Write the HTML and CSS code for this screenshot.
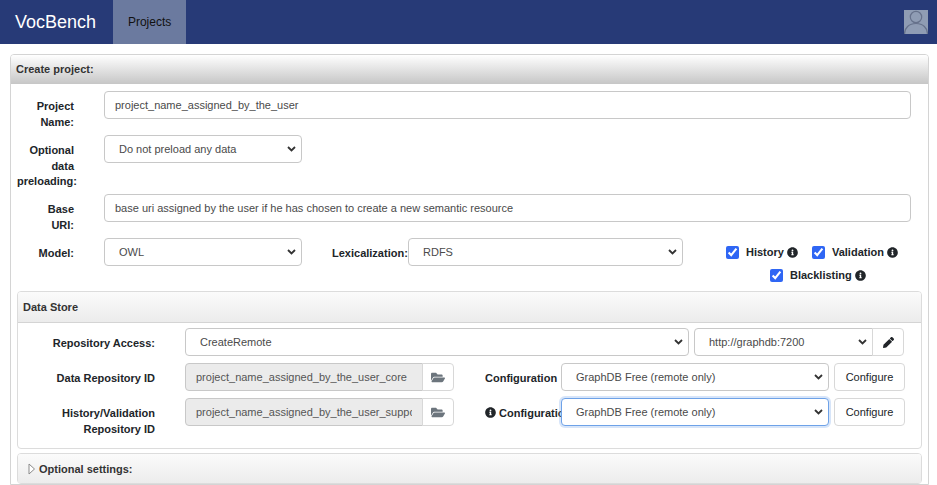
FILE: index.html
```html
<!DOCTYPE html>
<html lang="en">
<head>
    <meta charset="UTF-8">
    <title>VocBench</title>
    <link rel="stylesheet" href="styles.css">
</head>
<body>
    <svg class="defs" width="0" height="0">
        <symbol id="icon-info" viewBox="0 0 512 512"><path d="M256 8C119.043 8 8 119.083 8 256c0 136.997 111.043 248 248 248s248-111.003 248-248C504 119.083 392.957 8 256 8zm0 110c23.196 0 42 18.804 42 42s-18.804 42-42 42-42-18.804-42-42 18.804-42 42-42zm56 254c0 6.627-5.373 12-12 12h-88c-6.627 0-12-5.373-12-12v-24c0-6.627 5.373-12 12-12h12v-64h-12c-6.627 0-12-5.373-12-12v-24c0-6.627 5.373-12 12-12h64c6.627 0 12 5.373 12 12v100h12c6.627 0 12 5.373 12 12v24z"/></symbol>
        <symbol id="icon-folder" viewBox="0 0 576 512"><path d="M572.694 292.093L500.27 416.248A63.997 63.997 0 0 1 444.989 448H45.025c-18.523 0-30.064-20.093-20.731-36.093l72.424-124.155A64 64 0 0 1 152 256h399.964c18.523 0 30.064 20.093 20.73 36.093zM152 224h328v-48c0-26.51-21.49-48-48-48H272l-64-64H48C21.49 64 0 85.49 0 112v278.046l69.077-118.418C86.214 242.25 117.989 224 152 224z"/></symbol>
    </svg>

    <nav class="navbar">
        <a class="brand">VocBench</a>
        <a class="nav-tab">Projects</a>
        <div class="avatar">
            <svg viewBox="0 0 24 24" width="24" height="24">
                <circle cx="12" cy="7" r="5.700"/>
                <path d="M0.500 24c0-6 4.500-10.500 11.500-10.500s11.500 4.500 11.500 10.500"/>
            </svg>
        </div>
    </nav>

    <main class="panel">
        <div class="panel-head">Create project:</div>
        <form class="project-form">
            <div class="row">
                <label class="main-label">Project Name:</label>
                <input class="control grow" type="text" value="project_name_assigned_by_the_user">
            </div>
            <div class="row">
                <label class="main-label">Optional data preloading:</label>
                <select class="control select-main"><option>Do not preload any data</option></select>
            </div>
            <div class="row">
                <label class="main-label">Base<br>URI:</label>
                <input class="control grow" type="text" value="base uri assigned by the user if he has chosen to create a new semantic resource">
            </div>
            <div class="row">
                <label class="main-label">Model:</label>
                <select class="control select-main"><option>OWL</option></select>
                <label class="lex-label">Lexicalization:</label>
                <select class="control select-lex"><option>RDFS</option></select>
                <div class="checks">
                    <div class="check-line">
                        <label class="check"><input type="checkbox" checked>History <svg class="info"><use href="#icon-info"/></svg></label>
                        <label class="check"><input type="checkbox" checked>Validation <svg class="info"><use href="#icon-info"/></svg></label>
                    </div>
                    <div class="check-line second">
                        <label class="check"><input type="checkbox" checked>Blacklisting <svg class="info"><use href="#icon-info"/></svg></label>
                    </div>
                </div>
            </div>

            <section class="card">
                <div class="card-head">Data Store</div>
                <div class="card-body">
                    <div class="store-row">
                        <label class="store-label">Repository Access:</label>
                        <select class="control select-access"><option>CreateRemote</option></select>
                        <div class="group url-group">
                            <select class="control"><option>http://graphdb:7200</option></select>
                            <button type="button" class="btn icon-btn">
                                <svg width="11" height="11" viewBox="0 0 512 512"><path d="M497.9 142.1l-46.1 46.1c-4.7 4.7-12.3 4.7-17 0l-111-111c-4.7-4.7-4.7-12.3 0-17l46.1-46.1c18.7-18.7 49.1-18.7 67.9 0l60.1 60.1c18.8 18.7 18.8 49.1 0 67.9zM284.2 99.8L21.6 362.4.4 483.9c-2.9 16.4 11.4 30.6 27.8 27.8l121.5-21.3 262.6-262.6c4.7-4.7 4.7-12.3 0-17l-111-111c-4.8-4.7-12.4-4.7-17.1 0z"/></svg>
                            </button>
                        </div>
                    </div>
                    <div class="store-row">
                        <label class="store-label">Data Repository ID</label>
                        <div class="group repo-group">
                            <input class="control" type="text" disabled value="project_name_assigned_by_the_user_core">
                            <button type="button" class="btn icon-btn"><svg class="folder"><use href="#icon-folder"/></svg></button>
                        </div>
                        <label class="config-label">Configuration</label>
                        <select class="control select-config"><option>GraphDB Free (remote only)</option></select>
                        <button type="button" class="btn config-btn">Configure</button>
                    </div>
                    <div class="store-row last">
                        <label class="store-label">History/Validation Repository ID</label>
                        <div class="group repo-group">
                            <input class="control" type="text" disabled value="project_name_assigned_by_the_user_support">
                            <button type="button" class="btn icon-btn"><svg class="folder"><use href="#icon-folder"/></svg></button>
                        </div>
                        <label class="config-label"><svg class="info"><use href="#icon-info"/></svg> Configuration</label>
                        <select class="control select-config focused"><option>GraphDB Free (remote only)</option></select>
                        <button type="button" class="btn config-btn">Configure</button>
                    </div>
                </div>
            </section>

            <section class="card collapsed">
                <div class="card-head">
                    <svg class="caret" width="8" height="12" viewBox="0 0 8 12"><path d="M1 1l5.500 5-5.500 5z"/></svg>
                    Optional settings:
                </div>
            </section>
        </form>
    </main>
</body>
</html>
```

FILE: styles.css
```css
html, body {
    height: 100%;
    overflow: hidden;
}

body {
    margin: 0;
    background-color: #ffffff;
    color: #212529;
    font-family: 'Liberation Sans', Arial, sans-serif;
    font-size: 11px;
}

.defs {
    position: absolute;
}

.navbar {
    display: flex;
    align-items: stretch;
    height: 44px;
    background-color: #273a77;
}

.brand {
    padding: 0 17px 0 15px;
    color: #ffffff;
    font-size: 18px;
    line-height: 44px;
}

.nav-tab {
    width: 73px;
    background-color: #6b7a9f;
    color: #111111;
    font-size: 12px;
    line-height: 44px;
    text-align: center;
}

.avatar {
    align-self: center;
    width: 24px;
    height: 24px;
    margin-left: auto;
    margin-right: 9px;
    background-color: #8f9cb4;
}

.avatar svg {
    display: block;
    fill: none;
    stroke: #66718b;
    stroke-width: 1.2;
}

.panel {
    margin: 10px 8px 0 10px;
    border: 1px solid #d4d4d4;
    border-radius: 4px 4px 0 0;
}

.panel-head {
    height: 29px;
    padding-left: 5px;
    border-radius: 3px 3px 0 0;
    background: linear-gradient(#ffffff, #c6c6c6);
    color: #333333;
    font-weight: bold;
    line-height: 29px;
}

.project-form {
    padding: 7px 6px 0;
    display: grid;
    grid-template-rows: 44px 59px 44px 53px auto auto;
}

.row {
    display: flex;
    align-items: flex-start;
    padding-right: 11px;
}

.main-label {
    flex: none;
    width: 57px;
    margin-right: 30px;
    padding-top: 8px;
    font-weight: bold;
    line-height: 15.5px;
    text-align: right;
}

.control {
    box-sizing: border-box;
    height: 28px;
    padding: 0 10px;
    border: 1px solid #c8c8c8;
    border-radius: 4px;
    background-color: #ffffff;
    color: #4a4a4a;
    font: inherit;
    outline: none;
}

.grow {
    flex: 1;
    min-width: 0;
}

select.control {
    padding-left: 14px;
    padding-right: 24px;
    appearance: none;
    background-image: url("data:image/svg+xml,%3Csvg xmlns='http://www.w3.org/2000/svg' width='9' height='6' viewBox='0 0 9 6'%3E%3Cpath d='M1 1l3.500 3.500L8 1' fill='none' stroke='%23333' stroke-width='1.800'/%3E%3C/svg%3E");
    background-repeat: no-repeat;
    background-position: right 5px center;
}

.select-main {
    flex: none;
    width: 198px;
}

.lex-label {
    flex: none;
    width: 76px;
    margin-left: 30px;
    padding-top: 9px;
    font-weight: bold;
    white-space: nowrap;
}

.select-lex {
    flex: none;
    width: 275px;
}

.checks {
    flex: none;
    margin-left: 43px;
    margin-top: 6px;
}

.check-line {
    display: flex;
    gap: 14px;
    height: 23px;
}

.check-line.second {
    margin-left: 44px;
}

.check {
    display: flex;
    align-items: center;
    height: 16px;
    font-weight: bold;
    white-space: pre;
}

.check input {
    width: 13px;
    height: 13px;
    margin: 0 7px 0 0;
    accent-color: #2f66f4;
}

.info {
    width: 11px;
    height: 11px;
    fill: #212529;
    vertical-align: -1px;
}

.card {
    border: 1px solid #dcdcdc;
    border-radius: 4px;
}

.card-head {
    height: 30px;
    padding-left: 5px;
    border-bottom: 1px solid #d4d4d4;
    border-radius: 3px 3px 0 0;
    background: linear-gradient(#fbfbfb, #ececec);
    color: #333333;
    font-weight: bold;
    line-height: 30px;
}

.card-body {
    padding: 5px 16px 0 0;
}

.store-row {
    display: flex;
    align-items: flex-start;
    height: 35px;
}

.store-row.last {
    height: 50px;
}

.store-label {
    flex: none;
    width: 137px;
    margin-right: 30px;
    padding-top: 8px;
    font-weight: bold;
    line-height: 15.5px;
    text-align: right;
}

.select-access {
    flex: none;
    width: 504px;
    margin-right: 5px;
}

.group {
    display: flex;
    flex: none;
}

.group .control {
    min-width: 0;
    flex: 1;
    border-radius: 4px 0 0 4px;
}

.url-group {
    width: 210px;
}

.repo-group {
    width: 269px;
}

.group input:disabled {
    background-color: #ebebeb;
    color: #555555;
}

.btn {
    box-sizing: border-box;
    height: 28px;
    padding: 0;
    border: 1px solid #d8d8d8;
    border-radius: 4px;
    background-color: #ffffff;
    color: #212529;
    font: inherit;
}

.icon-btn {
    flex: none;
    display: flex;
    align-items: center;
    justify-content: center;
    width: 32px;
    margin-left: -1px;
    border-radius: 0 4px 4px 0;
}

.icon-btn svg {
    fill: #212529;
}

.icon-btn svg.folder {
    width: 14px;
    height: 13px;
    fill: #6c757d;
}

.config-label {
    flex: none;
    width: 76px;
    margin-left: 31px;
    padding-top: 9px;
    overflow: hidden;
    font-weight: bold;
    white-space: nowrap;
}

.select-config {
    flex: none;
    width: 268px;
    margin-right: 5px;
}

.focused {
    border-color: #6ea2e8;
    box-shadow: 0 0 0 2px rgba(110, 162, 232, 0.28);
}

.config-btn {
    flex: none;
    width: 71px;
}

.collapsed {
    margin-top: 4px;
}

.collapsed .card-head {
    display: flex;
    align-items: center;
    gap: 3px;
    height: 29px;
    padding-left: 10px;
    border-bottom: none;
    background: linear-gradient(#fbfbfb, #ececec);
}

.caret {
    fill: #ffffff;
    stroke: #8a8a8a;
    stroke-width: 1;
}
```
